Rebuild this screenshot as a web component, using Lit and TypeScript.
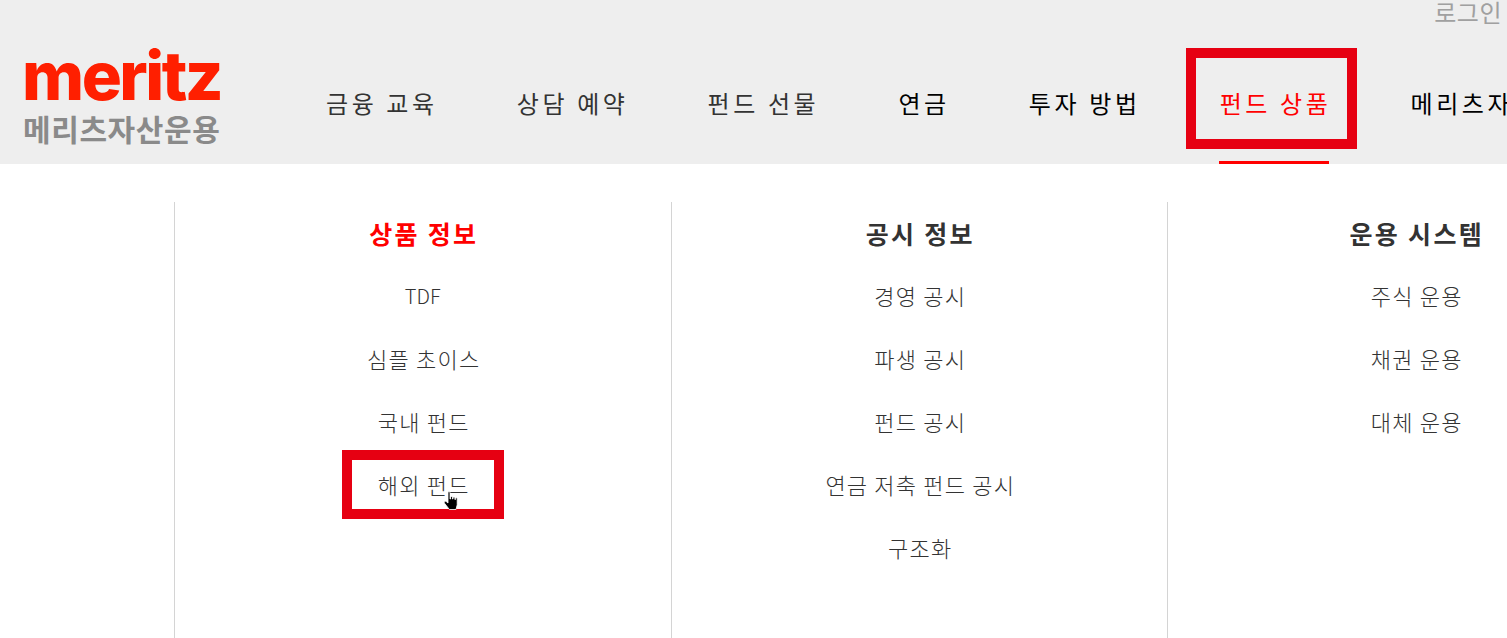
import { LitElement, html, css } from "lit";
import { customElement } from "lit/decorators.js";

const NAV = [
  { t: "금융 교육", c: "dim" },
  { t: "상담 예약", c: "dim" },
  { t: "펀드 선물", c: "dim" },
  { t: "연금", c: "" },
  { t: "투자 방법", c: "" },
  { t: "펀드 상품", c: "on" },
  { t: "메리츠자산운용", c: "" },
];
const COLS = [
  { h: "상품 정보", on: true, items: ["TDF", "심플 초이스", "국내 펀드", "해외 펀드"] },
  { h: "공시 정보", on: false, items: ["경영 공시", "파생 공시", "펀드 공시", "연금 저축 펀드 공시", "구조화"] },
  { h: "운용 시스템", on: false, items: ["주식 운용", "채권 운용", "대체 운용"] },
];

@customElement("app-root")
export class AppRoot extends LitElement {
  static styles = css`
    :host {
      display: block;
      position: relative;
      width: 1507px;
      height: 638px;
      overflow: hidden;
      background: #fff;
      font-family: "Noto Sans CJK KR", "Noto Sans", sans-serif;
      color: #333;
    }
    .header {
      height: 164px;
      background: #eee;
      display: grid;
      grid-template-columns: 302px minmax(0, 1fr);
      grid-template-rows: 26px 1fr;
      overflow: hidden;
    }
    .login {
      grid-column: 1 / 3;
      justify-self: end;
      padding-right: 5px;
      font-size: 24px;
      line-height: 24px;
      letter-spacing: 0.5px;
      color: #a0a0a0;
    }
    .logo {
      padding: 14px 0 0 22px;
      display: flex;
      flex-direction: column;
    }
    .mer {
      font-family: Inter, sans-serif;
      font-weight: 800;
      font-size: 67px;
      line-height: 72px;
      letter-spacing: -2.5px;
      color: #ff1f00;
    }
    .kr {
      font-size: 30px;
      line-height: 32px;
      padding-left: 1px;
      font-weight: 700;
      color: #8a8a8a;
      letter-spacing: 0.6px;
      white-space: nowrap;
    }
    nav {
      display: flex;
      gap: 79.1px;
      padding: 57px 0 0 24px;
      white-space: nowrap;
    }
    .nav {
      position: relative;
      font-size: 24px;
      line-height: 40px;
      height: 40px;
      letter-spacing: 3.6px;
      color: #000;
    }
    .nav.dim { color: #333; }
    .nav.on { color: #f00; }
    .nav.on::after {
      content: "";
      position: absolute;
      left: -1px;
      width: 110px;
      top: 78px;
      height: 3px;
      background: #f00;
    }
    .menu {
      display: flex;
      padding: 38px 0 0 174px;
      height: 474px;
    }
    .col {
      flex: none;
      width: 496.5px;
      height: 436px;
      box-sizing: border-box;
      border-left: 1px solid #d4d4d4;
      display: flex;
      flex-direction: column;
      align-items: center;
      padding-top: 11px;
    }
    .h {
      font-size: 25px;
      line-height: 40px;
      font-weight: 700;
      letter-spacing: 2.3px;
      padding-left: 2px;
      color: #333;
      margin-bottom: 11px;
    }
    .h.on { color: #f00; }
    .item {
      font-size: 22px;
      line-height: 63px;
      letter-spacing: 1.2px;
      padding-left: 2px;
      font-weight: 300;
      color: #333;
      white-space: nowrap;
    }
    .item.latin { letter-spacing: 0; font-size: 20px; padding-left: 0; }
    .mark {
      position: absolute;
      box-sizing: border-box;
      border: 10px solid #e60012;
    }
    .mark.a { left: 1186px; top: 48px; width: 171px; height: 101px; }
    .mark.b { left: 342px; top: 450px; width: 162px; height: 69px; }
    .cursor {
      position: absolute;
      left: 443px;
      top: 491px;
      width: 17px;
      height: 20px;
    }
  `;

  render() {
    return html`
      <div class="header">
        <span class="login">로그인</span>
        <div class="logo">
          <span class="mer">meritz</span>
          <span class="kr">메리츠자산운용</span>
        </div>
        <nav>
          ${NAV.map((n) => html`<span class="nav ${n.c}">${n.t}</span>`)}
        </nav>
      </div>
      <div class="menu">
        ${COLS.map(
          (c) => html`
            <div class="col">
              <div class="h ${c.on ? "on" : ""}">${c.h}</div>
              ${c.items.map(
                (i) => html`<div class="item ${i === "TDF" ? "latin" : ""}">${i}</div>`
              )}
            </div>
          `
        )}
      </div>
      <div class="mark a"></div>
      <div class="mark b"></div>
      <svg class="cursor" viewBox="0 0 17 20">
        <path
          d="M5 1.5c0-1 2-1 2 0V8h.6V6.2c0-1 1.9-1 1.9 0V8h.5V6.8c0-1 1.9-1 1.9 0V8.5h.5V7.6c0-1 1.8-1 1.8 0v6.2l-1.2 4.7H6.4L1.5 12.2c-.9-1.4.7-2.6 1.9-1.5L5 12z"
          fill="#000"
          stroke="#fff"
          stroke-width=".8"
        />
      </svg>
    `;
  }
}
